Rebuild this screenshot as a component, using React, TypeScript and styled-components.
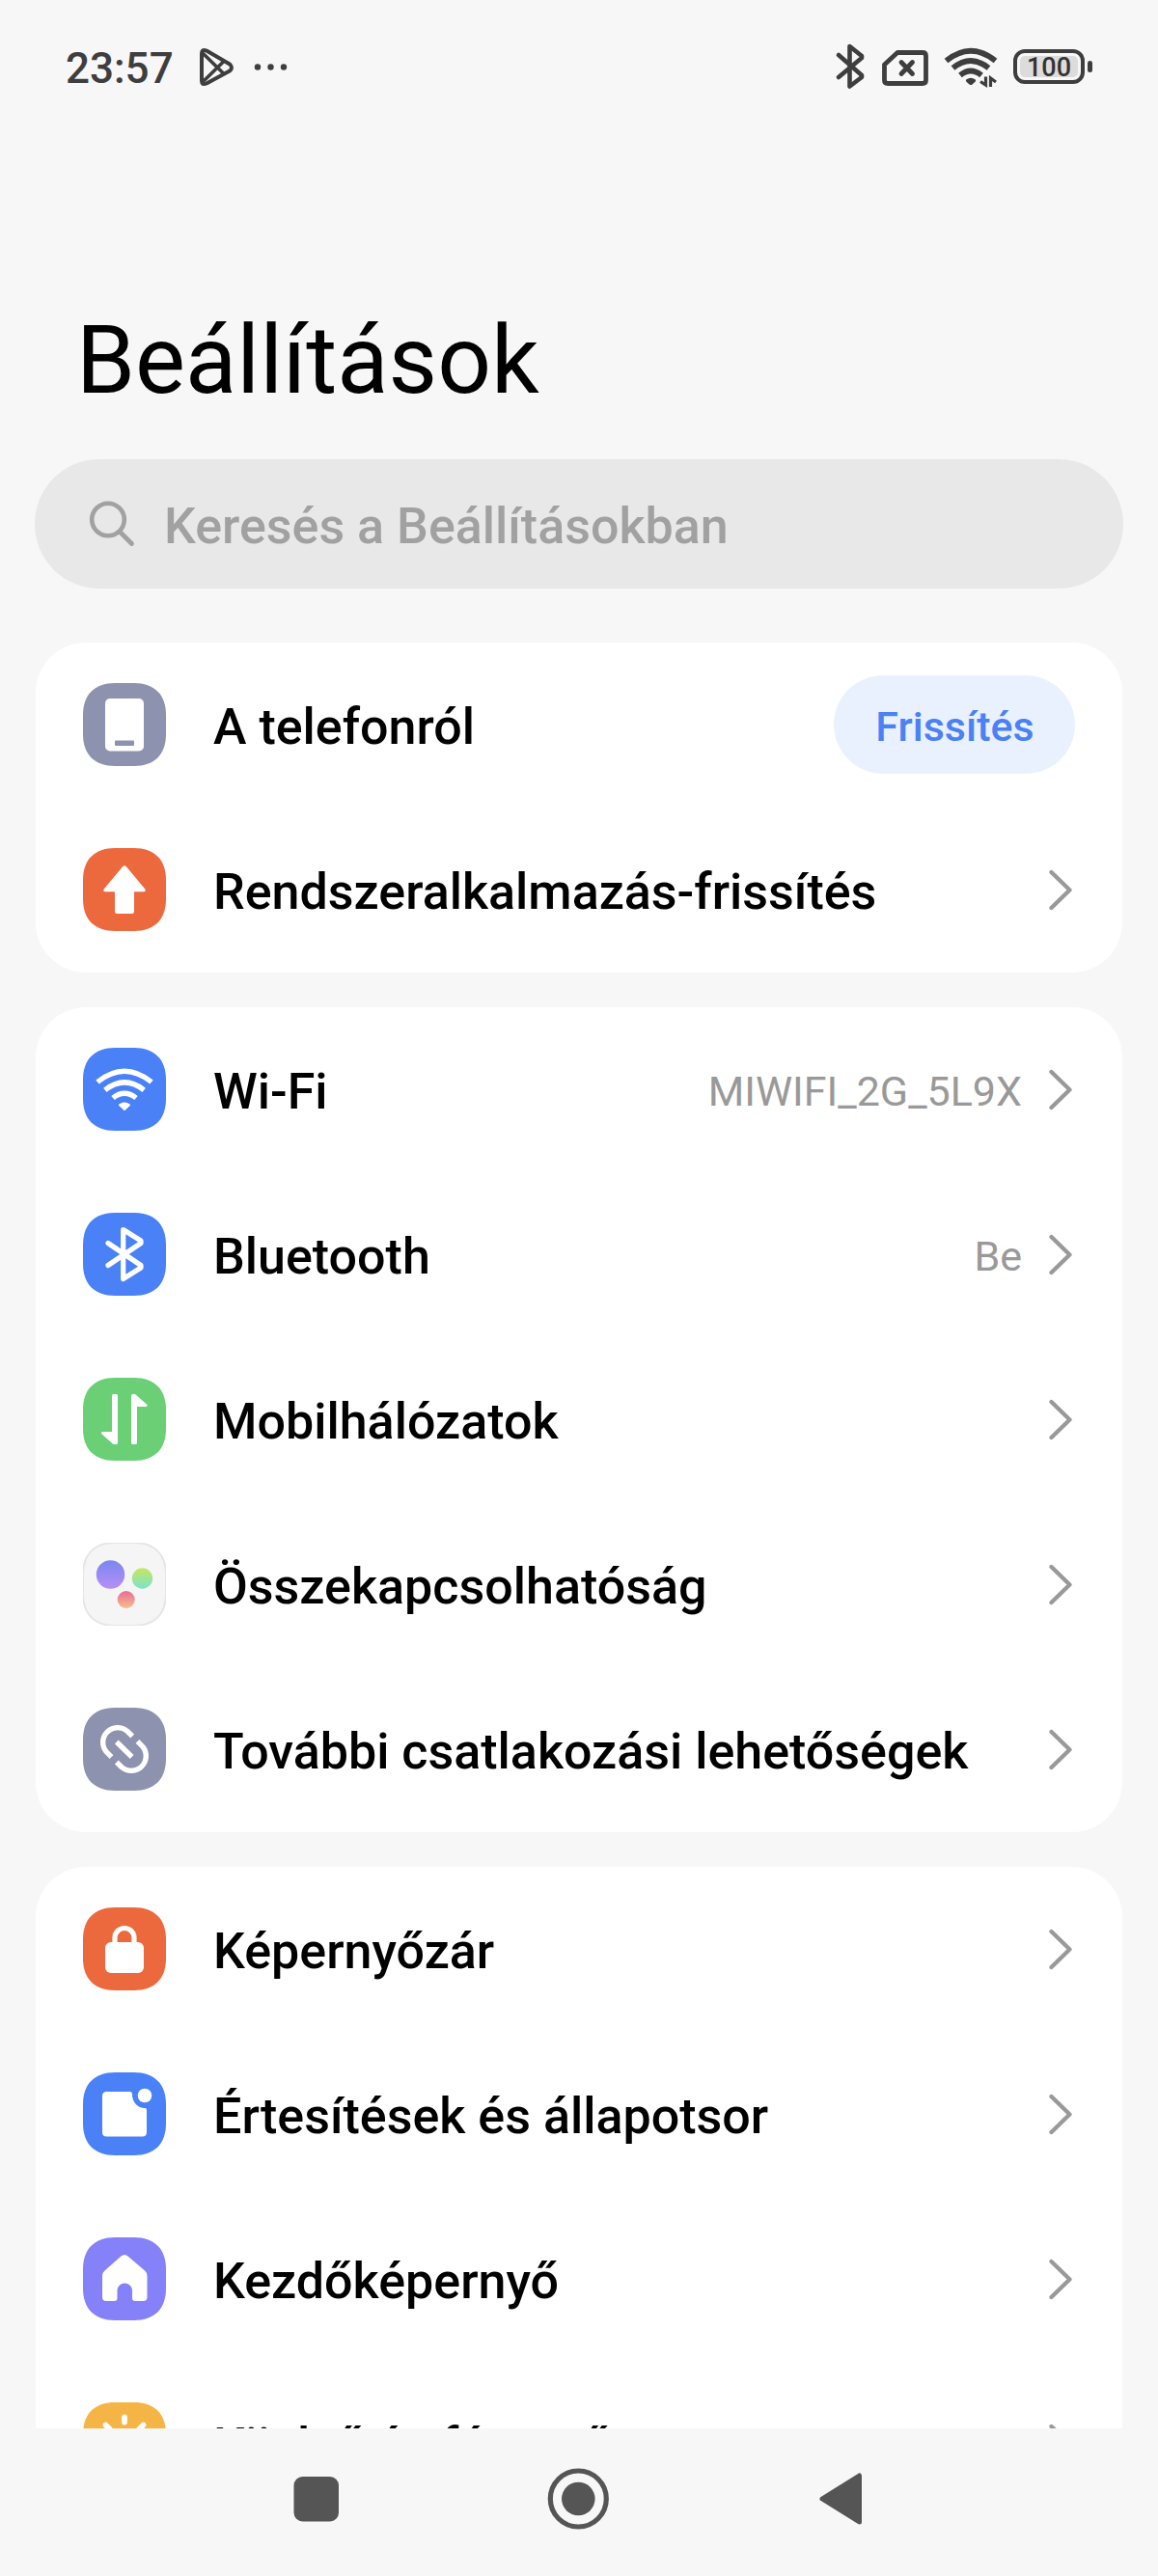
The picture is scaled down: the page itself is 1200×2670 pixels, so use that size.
import React from 'react';
import styled, { createGlobalStyle } from 'styled-components';

const GlobalStyle = createGlobalStyle`
  * { box-sizing: border-box; }
  body { margin: 0; background: #f7f7f7; }
`;

const Screen = styled.div`
  display: flex;
  flex-direction: column;
  width: 1200px;
  height: 2670px;
  overflow: hidden;
  background: #f7f7f7;
  color: #000;
  font-family: Roboto, 'Noto Sans', sans-serif;
`;

const StatusBar = styled.header`
  display: flex;
  flex: none;
  align-items: center;
  justify-content: space-between;
  height: 138px;
  padding: 0 68px;
`;

const StatusGroup = styled.div<{ $gap?: number }>`
  display: flex;
  align-items: center;
  gap: ${({ $gap = 0 }) => $gap}px;
`;

const Clock = styled.span`
  width: 128px;
  padding-top: 4px;
  font-size: 44px;
  font-weight: 500;
  line-height: 50px;
  color: #3e3e3e;
  white-space: nowrap;
`;

const Battery = styled.div`
  display: flex;
  align-items: center;
  gap: 3px;
`;

const BatteryShell = styled.div`
  width: 74px;
  height: 36px;
  padding: 3px;
  border: 4px solid #3e3e3e;
  border-radius: 12px;
`;

const BatteryFill = styled.div`
  display: flex;
  align-items: center;
  justify-content: center;
  width: 100%;
  height: 100%;
  padding-top: 2px;
  border-radius: 5px;
  background: #dcdcdc;
  color: #333;
  font-size: 27px;
  font-weight: 500;
  line-height: 24px;
`;

const BatteryTip = styled.div`
  width: 5px;
  height: 12px;
  border-radius: 3px;
  background: #3e3e3e;
`;

const Title = styled.h1`
  flex: none;
  margin: 0;
  padding: 175px 0 0 79px;
  height: 338px;
  font-size: 98px;
  font-weight: 400;
  line-height: 122px;
`;

const SearchBar = styled.div`
  display: flex;
  flex: none;
  align-items: center;
  height: 134px;
  margin: 0 36px 56px;
  padding-left: 54px;
  gap: 26px;
  border-radius: 67px;
  background: #e8e8e8;
  color: #a1a1a1;
  font-size: 52px;
  font-weight: 500;
`;

const SearchText = styled.span`
  line-height: 60px;
  padding-top: 5px;
`;

const List = styled.main`
  display: flex;
  flex: 1;
  flex-direction: column;
  gap: 36px;
  min-height: 0;
  padding: 0 37px;
  overflow: hidden;
`;

const Card = styled.section`
  flex: none;
  border-radius: 52px;
  background: #fff;
`;

const Row = styled.div`
  display: flex;
  align-items: center;
  height: 171px;
  padding: 0 49px 1px;
`;

const Tile = styled.svg`
  flex: none;
  width: 86px;
  height: 86px;
`;

const Label = styled.span`
  flex: 1;
  padding: 5px 0 0 49px;
  font-size: 52px;
  font-weight: 500;
  line-height: 60px;
  white-space: nowrap;
`;

const Value = styled.span`
  padding-top: 3px;
  margin-right: 27px;
  color: #999;
  font-size: 43px;
  line-height: 50px;
  white-space: nowrap;
`;

const ChevronIcon = styled.svg`
  flex: none;
  width: 26px;
  height: 44px;
  margin-right: 2px;
`;

const UpdateButton = styled.button`
  width: 250px;
  height: 102px;
  padding: 3px 0 0 1px;
  border: 0;
  border-radius: 51px;
  background: #eaf1fe;
  color: #4a81f5;
  font: 500 43px/50px Roboto, sans-serif;
`;

const NavBar = styled.nav`
  display: flex;
  flex: none;
  align-items: center;
  height: 153px;
  padding: 0 304px 8px;
  justify-content: space-between;
`;

const TILE_SHAPE =
  'M0 33C0 12 12 0 33 0H53C74 0 86 12 86 33V53C86 74 74 86 53 86H33C12 86 0 74 0 53Z';

type Glyph = { color: string; art: React.ReactNode };

const stroke = {
  fill: 'none',
  stroke: '#fff',
  strokeWidth: 5.2,
  strokeLinecap: 'round' as const,
  strokeLinejoin: 'round' as const,
};

const glyphs: Record<string, Glyph> = {
  phone: {
    color: '#8d92ae',
    art: (
      <>
        <rect x="23" y="16" width="40" height="54.5" rx="5" fill="#fff" />
        <rect x="33" y="59.500" width="20" height="5.500" rx="1" fill="#8d92ae" />
      </>
    ),
  },
  update: {
    color: '#ec693e',
    art: (
      <path
        d="M41.300 19Q43 17.300 44.700 19L64.300 42.500Q65.500 45 63 45.300H53V65.500Q53 68 50.500 68H35.500Q33 68 33 65.500V45.300H23Q20.500 45 21.700 42.500Z"
        fill="#fff"
      />
    ),
  },
  wifi: {
    color: '#4a81f7',
    art: (
      <g {...stroke} strokeLinecap="butt">
        <path d="M15 35.500Q43 13 71 35.500" strokeWidth="5.400" />
        <path d="M22.800 43.800Q43 28 63.200 43.800" strokeWidth="5.400" />
        <path d="M31 52Q43 42.500 55 52" strokeWidth="5.400" />
        <path d="M38 59.300Q43 55.800 48 59.300L43 64Z" fill="#fff" strokeWidth="2" />
      </g>
    ),
  },
  bluetooth: {
    color: '#4a81f7',
    art: <path {...stroke} d="M26 31.500L60 54.500V57L41.700 68.500V17.500L60 29V31.500L26 54.500" />,
  },
  mobile: {
    color: '#6acf75',
    art: (
      <g fill="#fff">
        <path d="M31.500 17H34.500Q36 17 36 18.500V67.500Q36 69 34.500 69H31.500L19.500 58.500Q18 56 20.500 56H30V18.500Q30 17 31.500 17Z" />
        <path d="M51.500 17H54L66 27.500Q67.500 30 65 30H56V67.500Q56 69 54.500 69H51.500Q50 69 50 67.500V18.500Q50 17 51.500 17Z" />
      </g>
    ),
  },
  connect: {
    color: '#f5f5f5',
    art: (
      <>
        <defs>
          <linearGradient id="violet" x2="0" y2="1">
            <stop stopColor="#7b87ee" />
            <stop offset="1" stopColor="#b58ff7" />
          </linearGradient>
          <linearGradient id="green" x2="0" y2="1">
            <stop stopColor="#c5e75f" />
            <stop offset="1" stopColor="#7ce3cc" />
          </linearGradient>
          <linearGradient id="coral" x2="0" y2="1">
            <stop stopColor="#e86b93" />
            <stop offset="1" stopColor="#f6c08b" />
          </linearGradient>
        </defs>
        <path d={TILE_SHAPE} fill="none" stroke="#e6e6e6" strokeWidth="2" />
        <circle cx="28.500" cy="33" r="14.700" fill="url(#violet)" />
        <circle cx="61.500" cy="37" r="10.700" fill="url(#green)" />
        <circle cx="44.700" cy="59" r="9" fill="url(#coral)" />
      </>
    ),
  },
  link: {
    color: '#8d92ae',
    art: (
      <g {...stroke} strokeWidth="5.400" strokeLinecap="butt">
        <path d="M51.200 29.500L45.500 24A15.300 15.300 0 0 0 24 45.500L29.500 51.200" />
        <path d="M56.500 34.800L62 40.500A15.300 15.300 0 0 1 40.500 62L34.800 56.500" />
        <path d="M34.800 35.500L50.700 51" />
      </g>
    ),
  },
  lock: {
    color: '#ec693e',
    art: (
      <>
        <rect x="23" y="36" width="40" height="32" rx="6" fill="#fff" />
        <path {...stroke} strokeLinecap="butt" d="M33 38V31.500A10 10 0 0 1 53 31.500V38" />
      </>
    ),
  },
  notify: {
    color: '#4a81f7',
    art: (
      <g fill="#fff">
        <path d="M24.500 20H48.500Q51 20 51 23C51 31 57 37 64 37Q66 37 66 39V62Q66 66.500 61.500 66.500H24.500Q20 66.500 20 62V24.500Q20 20 24.500 20Z" />
        <circle cx="64" cy="24" r="7.300" />
      </g>
    ),
  },
  home: {
    color: '#8581f8',
    art: (
      <path
        fill="#fff"
        d="M39.500 19.500Q43 16.500 46.500 19.500L64 34.500Q66.500 36.500 66.500 40V62Q66.500 66 62.500 66H54Q51 66 51 63V54.500A7.800 7.800 0 0 0 35.500 54.500V63Q35.500 66 32.500 66H24Q20 66 20 62V40Q20 36.500 22.500 34.500Z"
      />
    ),
  },
  display: {
    color: '#f5b546',
    art: (
      <g {...stroke} strokeWidth="5.800">
        <path d="M43 15.500V20.500M23.500 23.500L27.500 27.500M62.500 23.500L58.500 27.500M15.500 43H20.500M65.500 43H70.500M23.500 62.500L27.500 58.500M62.500 62.500L58.500 58.500M43 65.500V70.500" />
        <circle cx="43" cy="43" r="11" fill="#fff" />
      </g>
    ),
  },
};

type Item = { icon: string; label: string; value?: string; button?: string };

const groups: Item[][] = [
  [
    { icon: 'phone', label: 'A telefonról', button: 'Frissítés' },
    { icon: 'update', label: 'Rendszeralkalmazás-frissítés' },
  ],
  [
    { icon: 'wifi', label: 'Wi-Fi', value: 'MIWIFI_2G_5L9X' },
    { icon: 'bluetooth', label: 'Bluetooth', value: 'Be' },
    { icon: 'mobile', label: 'Mobilhálózatok' },
    { icon: 'connect', label: 'Összekapcsolhatóság' },
    { icon: 'link', label: 'További csatlakozási lehetőségek' },
  ],
  [
    { icon: 'lock', label: 'Képernyőzár' },
    { icon: 'notify', label: 'Értesítések és állapotsor' },
    { icon: 'home', label: 'Kezdőképernyő' },
    { icon: 'display', label: 'Kijelző és fényerő' },
  ],
];

const Chevron = () => (
  <ChevronIcon viewBox="0 0 26 44" fill="none">
    <path
      d="M3.500 4L22.500 22.500L3.500 41"
      stroke="#999"
      strokeWidth="4.300"
      strokeLinecap="round"
      strokeLinejoin="round"
    />
  </ChevronIcon>
);

const SettingRow = ({ icon, label, value, button }: Item) => (
  <Row>
    <Tile viewBox="0 0 86 86">
      <path d={TILE_SHAPE} fill={glyphs[icon].color} />
      {glyphs[icon].art}
    </Tile>
    <Label>{label}</Label>
    {value && <Value>{value}</Value>}
    {button ? <UpdateButton>{button}</UpdateButton> : <Chevron />}
  </Row>
);

const StatusLeft = () => (
  <StatusGroup>
    <Clock>23:57</Clock>
    <svg width="106" height="44" viewBox="0 0 106 44" fill="none" stroke="#3e3e3e" strokeWidth="4">
      <path
        d="M13 8.500Q13 3.500 18 5.500L42 19.500Q46 23 42 26.500L18 39.500Q13 41.500 13 37Z"
        strokeLinejoin="round"
      />
      <path d="M14 8L36.500 30M14 38L36.500 16" strokeWidth="3.600" />
      <g fill="#3e3e3e" stroke="none">
        <circle cx="71" cy="22.500" r="3.200" />
        <circle cx="84.500" cy="22.500" r="3.200" />
        <circle cx="98" cy="22.500" r="3.200" />
      </g>
    </svg>
  </StatusGroup>
);

const StatusRight = () => (
  <StatusGroup $gap={3}>
    <svg width="182" height="50" viewBox="0 0 182 50" fill="none" stroke="#3e3e3e">
      <path
        d="M4 13L28 34V36L15.500 45.500V4L28 14V16L4 36"
        strokeWidth="4.600"
        strokeLinecap="round"
        strokeLinejoin="round"
      />
      <path
        d="M65 10.500H91Q94.500 10.500 94.500 14V39Q94.500 42.500 91 42.500H55Q51.500 42.500 51.500 39V23Z"
        strokeWidth="4.800"
        strokeLinejoin="round"
      />
      <path d="M69 20.500L80.500 32.500M80.500 20.500L69 32.500" strokeWidth="4.800" strokeLinecap="round" />
      <g strokeWidth="5.800">
        <path d="M115.500 19Q141 -1.500 166.500 19" />
        <path d="M122.500 26.500Q141 11.500 159.500 26.500" />
        <path d="M130 34Q141 25 152 34" />
      </g>
      <path
        d="M136.500 38.300Q141 35 145.500 38.300Q147 39.500 145 41.300L142.500 43.500Q141 44.700 139.500 43.500L137 41.300Q135 39.500 136.500 38.300Z"
        fill="#3e3e3e"
        stroke="none"
      />
      <path d="M151 40.500L156.500 44V35.500M161.500 46V37L167 41" strokeWidth="3.200" />
    </svg>
    <Battery>
      <BatteryShell>
        <BatteryFill>100</BatteryFill>
      </BatteryShell>
      <BatteryTip />
    </Battery>
  </StatusGroup>
);

export default function App() {
  return (
    <Screen>
      <GlobalStyle />
      <StatusBar>
        <StatusLeft />
        <StatusRight />
      </StatusBar>
      <Title>Beállítások</Title>
      <SearchBar>
        <svg width="54" height="50" viewBox="0 0 54 50" fill="none" stroke="#a1a1a1">
          <circle cx="22" cy="20.500" r="16.800" strokeWidth="4.600" />
          <path d="M34 33L46.500 45.500" strokeWidth="4.800" strokeLinecap="round" />
        </svg>
        <SearchText>Keresés a Beállításokban</SearchText>
      </SearchBar>
      <List>
        {groups.map((items) => (
          <Card key={items[0].icon}>
            {items.map((item) => (
              <SettingRow key={item.icon} {...item} />
            ))}
          </Card>
        ))}
      </List>
      <NavBar>
        <svg width="48" height="48" viewBox="0 0 48 48">
          <rect x="0.500" y="1" width="46.500" height="46.500" rx="9" fill="#555" />
        </svg>
        <svg width="64" height="64" viewBox="0 0 64 64" fill="none">
          <circle cx="32.300" cy="32" r="29" stroke="#555" strokeWidth="5.200" />
          <circle cx="32.300" cy="32" r="17.300" fill="#555" />
        </svg>
        <svg width="50" height="56" viewBox="0 0 50 56">
          <path
            d="M6 28L44.500 4V52Z"
            fill="#555"
            stroke="#555"
            strokeWidth="5"
            strokeLinejoin="round"
          />
        </svg>
      </NavBar>
    </Screen>
  );
}
